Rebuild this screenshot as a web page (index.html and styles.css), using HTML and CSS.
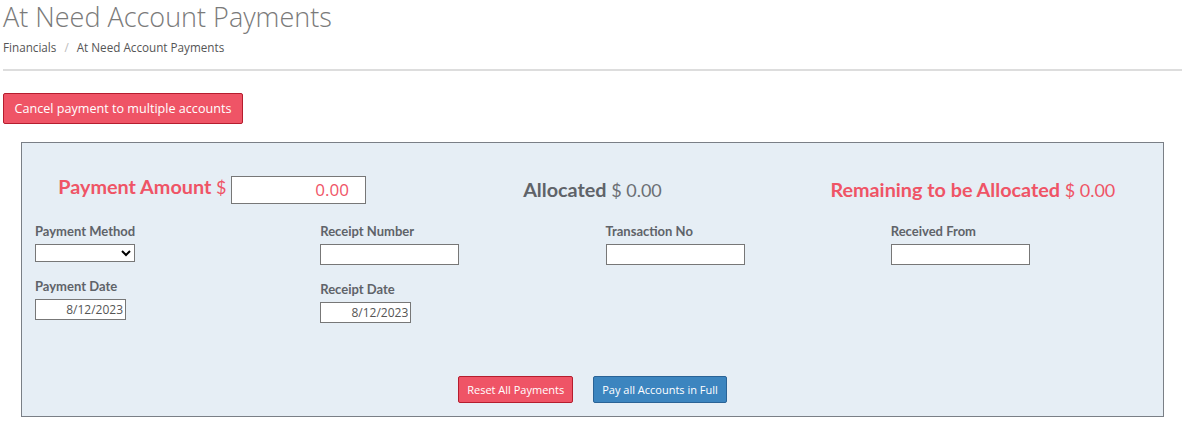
FILE: index.html
```html
<!DOCTYPE html>
<html>
<head>
<meta charset="utf-8">
<link rel="stylesheet" href="styles.css">
</head>
<body>
<div class="page">
  <h1 class="title">At Need Account Payments</h1>
  <div class="crumbs"><span>Financials</span><span class="sep">/</span><span>At Need Account Payments</span></div>
  <hr class="rule">
  <button class="btn btn-red btn-cancel">Cancel payment to multiple accounts</button>
  <div class="panel">
    <div class="totals">
      <div class="total red"><b>Payment Amount</b> <span>$</span> <input class="amount" type="text" value="0.00"></div>
      <div class="total grey"><b>Allocated</b> <span>$ 0.00</span></div>
      <div class="total red"><b>Remaining to be Allocated</b> <span>$ 0.00</span></div>
    </div>
    <div class="fields">
      <div class="field">
        <label>Payment Method</label>
        <select class="sel"><option></option></select>
      </div>
      <div class="field">
        <label>Receipt Number</label>
        <input class="txt" type="text">
      </div>
      <div class="field">
        <label>Transaction No</label>
        <input class="txt" type="text">
      </div>
      <div class="field">
        <label>Received From</label>
        <input class="txt" type="text">
      </div>
      <div class="field">
        <label>Payment Date</label>
        <input class="date" type="text" value="8/12/2023">
      </div>
      <div class="field f2">
        <label>Receipt Date</label>
        <input class="date" type="text" value="8/12/2023">
      </div>
    </div>
    <div class="actions">
      <button class="btn btn-red btn-sm">Reset All Payments</button>
      <button class="btn btn-blue btn-sm">Pay all Accounts in Full</button>
    </div>
  </div>
</div>
</body>
</html>
```
FILE: styles.css
```css
html, body { margin: 0; padding: 0; background: #fff; }
body { font-family: "Open Sans", sans-serif; color: #555; }
.page { padding: 0 3px; }
.title {
  margin: 0;
  padding-top: 0;
  font-weight: 300;
  font-size: 27px;
  line-height: 33px;
  color: #7a7a7a;
}
.crumbs {
  margin-top: 6px;
  font-size: 11.7px;
  line-height: 16px;
  color: #555;
}
.crumbs .sep { color: #bbb; margin: 0 8px; }
.rule {
  margin: 14px 0 0 0;
  border: 0;
  border-top: 2px solid #ddd;
}
.btn {
  font-family: "Open Sans", sans-serif;
  color: #fff;
  border-radius: 2px;
  cursor: pointer;
}
.btn-red { background: #ef5466; border: 1px solid #b51d2e; }
.btn-blue { background: #3c85bf; border: 1px solid #2a6396; }
.btn-cancel {
  display: block;
  margin-top: 22px;
  height: 31px;
  width: 240px;
  padding: 0;
  font-size: 12.6px;
}
.panel {
  margin: 18px 18px 0 18px;
  width: 1141px;
  height: 273px;
  background: #e6eef5;
  border: 1px solid #7a7f86;
  display: flex;
  flex-direction: column;
}
.totals {
  display: grid;
  grid-template-columns: 1fr 1fr 1fr;
  margin-top: 31px;
  height: 30px;
  align-items: center;
}
.total {
  text-align: center;
  font-family: Lato, sans-serif;
  font-size: 18px;
}
.total b { font-weight: 700; font-size: 19.8px; }
.total span { font-weight: 400; }
.red { color: #ef5466; }
.grey { color: #5a5f66; }
.grey b { color: #5f6369; }
.grey span { color: #6b6f74; }
.amount {
  width: 135px;
  height: 28px;
  box-sizing: border-box;
  border: 1px solid #777;
  background: #fff;
  text-align: right;
  font-family: "Open Sans", sans-serif;
  font-size: 17px;
  color: #ef5466;
  padding: 0 16px 0 4px;
  vertical-align: middle;
  margin-left: 0;
}
.fields {
  display: grid;
  grid-template-columns: repeat(4, 1fr);
  margin-top: 19px;
  row-gap: 13px;
}
.field { display: flex; flex-direction: column; align-items: flex-start; padding-left: 13px; }
.field label {
  font-family: Lato, sans-serif;
  font-weight: 700;
  font-size: 13px;
  line-height: 16px;
  color: #5f6369;
  margin-bottom: 5px;
}
.f2 { margin-top: 3px; }
.sel {
  width: 100px;
  height: 18px;
  border: 1px solid #777;
  background: #fff;
  border-radius: 0;
  font-size: 12px;
}
.txt {
  width: 139px;
  height: 21px;
  box-sizing: border-box;
  border: 1px solid #777;
  background: #fff;
  margin: 0;
}
.date {
  width: 91px;
  height: 21px;
  box-sizing: border-box;
  border: 1px solid #777;
  background: #fff;
  text-align: right;
  font-family: "Open Sans", sans-serif;
  font-size: 12px;
  color: #555;
  padding: 0 2px;
  margin: 0;
}
.actions {
  margin-top: auto;
  margin-bottom: 13px;
  display: flex;
  justify-content: center;
  gap: 20px;
}
.btn-sm {
  height: 27px;
  padding: 0 8px;
  font-size: 11px;
}
```
